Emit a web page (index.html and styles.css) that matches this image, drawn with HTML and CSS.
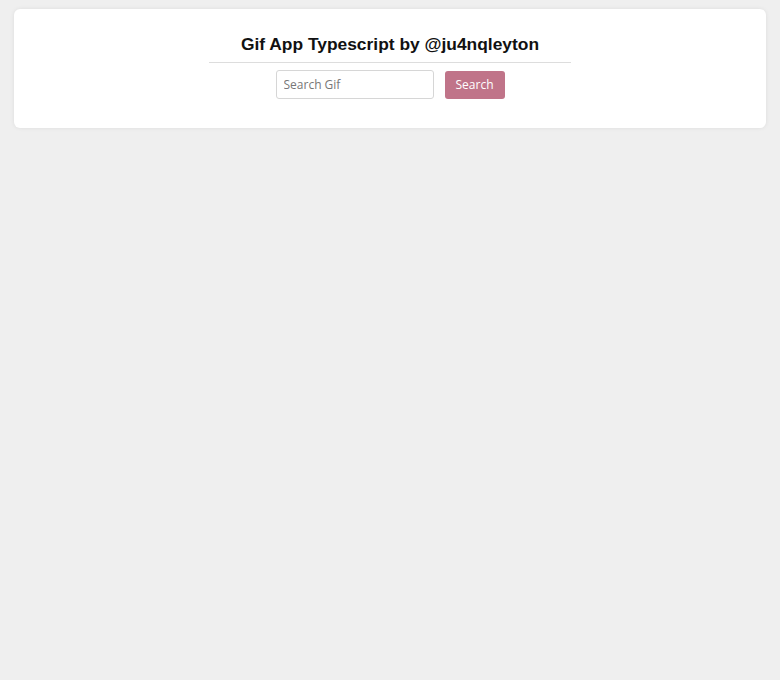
FILE: index.html
```html
<!DOCTYPE html>
<html>
<head>
<meta charset="utf-8">
<link rel="stylesheet" href="styles.css">
</head>
<body>
<div class="card">
  <h2 class="title">Gif App Typescript by @ju4nqleyton</h2>
  <hr class="divider">
  <form class="search">
    <input class="search-input" type="text" placeholder="Search Gif">
    <button class="search-btn" type="button">Search</button>
  </form>
</div>
</body>
</html>
```
FILE: styles.css
```css
html, body {
  margin: 0;
  padding: 0;
}
body {
  background: #efefef;
  font-family: "Open Sans", sans-serif;
  padding: 9px 14px;
}
.card {
  background: #fff;
  border-radius: 6px;
  box-shadow: 0 0 4px rgba(0,0,0,0.08);
  height: 119px;
  box-sizing: border-box;
  padding-top: 24px;
  display: flex;
  flex-direction: column;
  align-items: center;
}
.title {
  margin: 0;
  font-family: "Liberation Sans", Arial, sans-serif;
  font-size: 17.4px;
  font-weight: bold;
  color: #111;
  line-height: 22px;
}
.divider {
  width: 362px;
  border: 0;
  border-top: 1px solid #ddd;
  margin: 7px 0 0;
}
.search {
  display: flex;
  align-items: center;
  gap: 11px;
  margin-top: 7px;
}
.search-input {
  width: 158px;
  height: 29px;
  box-sizing: border-box;
  border: 1px solid #d6d6d6;
  border-radius: 3px;
  padding: 0 7px;
  font-family: "Open Sans", sans-serif;
  font-size: 12px;
  color: #333;
}
.search-input::placeholder {
  color: #777;
}
.search-btn {
  width: 60px;
  height: 28px;
  border: 0;
  border-radius: 3px;
  background: #c07489;
  color: #fff;
  font-family: "Open Sans", sans-serif;
  font-size: 12px;
  padding: 0;
}
```
